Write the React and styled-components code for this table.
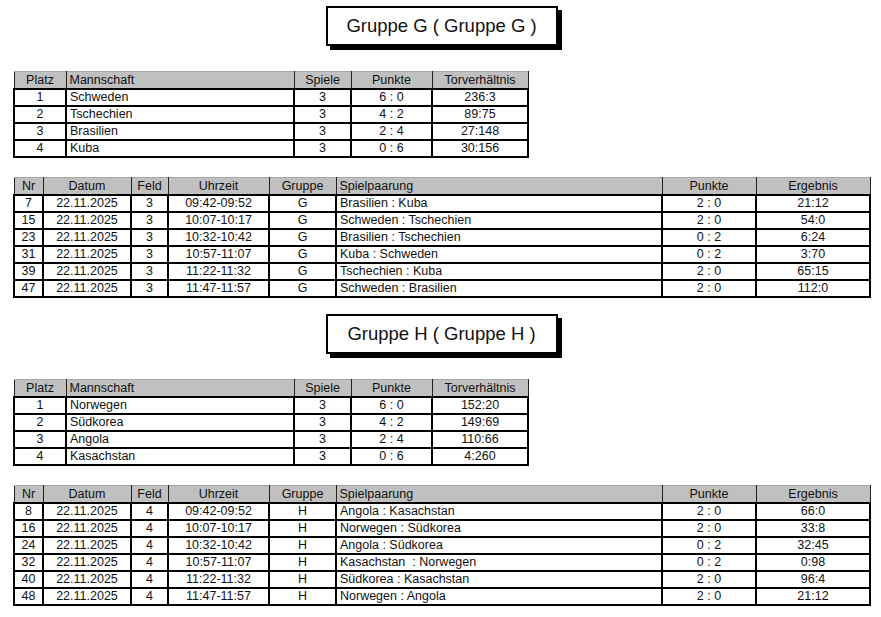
import React from 'react'
import styled, { createGlobalStyle } from 'styled-components'

const GlobalStyle = createGlobalStyle`
  body {
    margin: 0;
    background: #ffffff;
    font-family: "Liberation Sans", Arial, sans-serif;
    color: #111;
  }
`

const Page = styled.div`
  width: 881px;
  display: flex;
  flex-direction: column;
  padding-top: 6px;
`

const Section = styled.section`
  display: flex;
  flex-direction: column;
  margin-bottom: 16px;
`

const TitleRow = styled.div`
  display: flex;
  justify-content: center;
  padding-left: 2px;
  margin-bottom: 25px;
`

const TitleBox = styled.h2`
  margin: 0;
  width: 228px;
  height: 36px;
  border: 2px solid #000;
  box-shadow: 4px 4px 0 #000;
  display: flex;
  align-items: center;
  justify-content: center;
  font-size: 18.5px;
  font-weight: 400;
  color: #111;
`

const Table = styled.table`
  margin-left: 13px;
  width: ${p => p.$width}px;
  border-collapse: collapse;
  table-layout: fixed;
  font-size: 12.5px;
  margin-bottom: ${p => p.$gap || 0}px;
`

const Th = styled.th`
  height: 16px;
  padding: 0 3px;
  background: #c0c0c0;
  font-weight: 400;
  text-align: ${p => (p.$left ? 'left' : 'center')};
  border-left: 1px solid #222;
  border-right: 1px solid #222;
  border-top: 1px solid #a8a8a8;
  line-height: 15px;
  white-space: nowrap;
  overflow: hidden;
`

const Td = styled.td`
  height: 15px;
  padding: 0 3px;
  border: 2px solid #000;
  text-align: ${p => (p.$left ? 'left' : 'center')};
  line-height: 15px;
  white-space: nowrap;
  overflow: hidden;
`

const standCols = [
  { label: 'Platz', w: 52 },
  { label: 'Mannschaft', w: 228, left: true },
  { label: 'Spiele', w: 57 },
  { label: 'Punkte', w: 81 },
  { label: 'Torverhältnis', w: 96 },
]

const matchCols = [
  { label: 'Nr', w: 29 },
  { label: 'Datum', w: 88 },
  { label: 'Feld', w: 37 },
  { label: 'Uhrzeit', w: 101 },
  { label: 'Gruppe', w: 67 },
  { label: 'Spielpaarung', w: 326, left: true },
  { label: 'Punkte', w: 94 },
  { label: 'Ergebnis', w: 114 },
]

const groups = [
  {
    name: 'G',
    field: '3',
    standings: [
      ['1', 'Schweden', '3', '6 : 0', '236:3'],
      ['2', 'Tschechien', '3', '4 : 2', '89:75'],
      ['3', 'Brasilien', '3', '2 : 4', '27:148'],
      ['4', 'Kuba', '3', '0 : 6', '30:156'],
    ],
    matches: [
      ['7', '09:42-09:52', 'Brasilien : Kuba', '2 : 0', '21:12'],
      ['15', '10:07-10:17', 'Schweden : Tschechien', '2 : 0', '54:0'],
      ['23', '10:32-10:42', 'Brasilien : Tschechien', '0 : 2', '6:24'],
      ['31', '10:57-11:07', 'Kuba : Schweden', '0 : 2', '3:70'],
      ['39', '11:22-11:32', 'Tschechien : Kuba', '2 : 0', '65:15'],
      ['47', '11:47-11:57', 'Schweden : Brasilien', '2 : 0', '112:0'],
    ],
  },
  {
    name: 'H',
    field: '4',
    standings: [
      ['1', 'Norwegen', '3', '6 : 0', '152:20'],
      ['2', 'Südkorea', '3', '4 : 2', '149:69'],
      ['3', 'Angola', '3', '2 : 4', '110:66'],
      ['4', 'Kasachstan', '3', '0 : 6', '4:260'],
    ],
    matches: [
      ['8', '09:42-09:52', 'Angola : Kasachstan', '2 : 0', '66:0'],
      ['16', '10:07-10:17', 'Norwegen : Südkorea', '2 : 0', '33:8'],
      ['24', '10:32-10:42', 'Angola : Südkorea', '0 : 2', '32:45'],
      ['32', '10:57-11:07', 'Kasachstan\u00a0 : Norwegen', '0 : 2', '0:98'],
      ['40', '11:22-11:32', 'Südkorea : Kasachstan', '2 : 0', '96:4'],
      ['48', '11:47-11:57', 'Norwegen : Angola', '2 : 0', '21:12'],
    ],
  },
]

const DataTable = ({ cols, rows, width, gap }) => (
  <Table $width={width} $gap={gap}>
    <colgroup>
      {cols.map(c => <col key={c.label} style={{ width: c.w }} />)}
    </colgroup>
    <thead>
      <tr>
        {cols.map(c => <Th key={c.label} $left={c.left}>{c.label}</Th>)}
      </tr>
    </thead>
    <tbody>
      {rows.map((r, i) => (
        <tr key={i}>
          {r.map((v, j) => <Td key={j} $left={cols[j].left}>{v}</Td>)}
        </tr>
      ))}
    </tbody>
  </Table>
)

const App = () => (
  <Page>
    <GlobalStyle />
    {groups.map(g => (
      <Section key={g.name}>
        <TitleRow>
          <TitleBox>Gruppe {g.name} ( Gruppe {g.name} )</TitleBox>
        </TitleRow>
        <DataTable cols={standCols} rows={g.standings} width={514} gap={19} />
        <DataTable
          cols={matchCols}
          width={856}
          rows={g.matches.map(m => [m[0], '22.11.2025', g.field, m[1], g.name, m[2], m[3], m[4]])}
        />
      </Section>
    ))}
  </Page>
)

export default App
